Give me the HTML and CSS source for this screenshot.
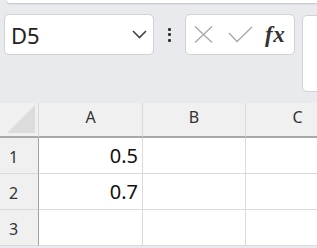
FILE: index.html
```html
<!DOCTYPE html>
<html lang="en">
<head>
    <meta charset="UTF-8">
    <meta name="viewport" content="width=device-width, initial-scale=1.0">
    <title>Sheet</title>
    <link rel="stylesheet" href="styles.css">
</head>
<body>
    <div class="ribbon"></div>
    <div class="toolbar">
        <div class="name-box">
            <span class="name">D5</span>
            <svg class="chevron" width="15" height="9" viewBox="0 0 15 9">
                <path d="M1 1 L7.5 7.5 L14 1" fill="none" stroke="#444" stroke-width="1.6"/>
            </svg>
        </div>
        <div class="more">
            <span class="dot"></span>
            <span class="dot"></span>
            <span class="dot"></span>
        </div>
        <div class="fx-box">
            <svg class="cancel" width="19" height="17" viewBox="0 0 19 17">
                <path d="M1 0.5 L18 16.5 M18 0.5 L1 16.5" stroke="#aaa" stroke-width="1.4"/>
            </svg>
            <svg class="enter" width="25" height="17" viewBox="0 0 25 17">
                <path d="M1 7 L9 15.5 L24 1" fill="none" stroke="#aaa" stroke-width="1.4"/>
            </svg>
            <span class="fx">fx</span>
        </div>
        <div class="formula-input"></div>
    </div>

    <!-- grid -->
    <div class="sheet">
        <div class="cell corner"><span class="tri"></span></div>
        <div class="cell col-head">A</div>
        <div class="cell col-head">B</div>
        <div class="cell col-head">C</div>

        <div class="cell row-head">1</div>
        <div class="cell num">0.5</div>
        <div class="cell"></div>
        <div class="cell"></div>

        <div class="cell row-head">2</div>
        <div class="cell num">0.7</div>
        <div class="cell"></div>
        <div class="cell"></div>

        <div class="cell row-head">3</div>
        <div class="cell"></div>
        <div class="cell"></div>
        <div class="cell"></div>
    </div>
</body>
</html>
```

FILE: styles.css
```css
body {
    margin: 0;
    width: 317px;
    height: 248px;
    overflow: hidden;
    background-color: #e8eaed;
    font-family: "Noto Sans", "Open Sans", sans-serif;
}
.ribbon {
    height: 3px;
    margin-left: 7px;
    background-color: #fff;
    border-bottom-left-radius: 6px;
    box-shadow: 0 1px 2px rgba(0, 0, 0, 0.18);
}
.toolbar {
    display: flex;
    align-items: flex-start;
    padding: 11px 0 0 4px;
}
.name-box {
    box-sizing: border-box;
    flex: 0 0 150px;
    height: 41px;
    display: flex;
    align-items: center;
    justify-content: space-between;
    padding: 0 6px 0 6px;
    background-color: #fff;
    border: 1px solid #d2d2d2;
    border-radius: 5px;
}
.name {
    font-size: 22px;
    color: #222;
}
.more {
    flex: 0 0 31px;
    height: 41px;
    display: flex;
    flex-direction: column;
    align-items: center;
    justify-content: center;
    gap: 2.5px;
}
.dot {
    width: 3px;
    height: 3px;
    border-radius: 1px;
    background-color: #333;
}
.fx-box {
    box-sizing: border-box;
    flex: 0 0 110px;
    height: 41px;
    display: flex;
    align-items: center;
    padding-left: 8px;
    background-color: #fff;
    border: 1px solid #d2d2d2;
    border-radius: 5px;
}
.enter {
    margin-left: 15px;
}
.fx {
    margin-left: 12px;
    font-family: "Liberation Serif", serif;
    font-style: italic;
    font-weight: bold;
    font-size: 23px;
    color: #333;
    letter-spacing: 0.5px;
}
.formula-input {
    box-sizing: border-box;
    flex: 0 0 40px;
    height: 77px;
    margin: 1px 0 0 7px;
    background-color: #fff;
    border: 1px solid #d2d2d2;
    border-radius: 5px;
}
.sheet {
    margin-top: 11px;
    display: grid;
    grid-template-columns: 39px 104px 103px 104px;
    grid-template-rows: 35px;
    grid-auto-rows: 36px;
    background-color: #fff;
}
.cell {
    box-sizing: border-box;
    display: flex;
    align-items: center;
    border-right: 1px solid #dadada;
    border-bottom: 1px solid #dadada;
    font-size: 20px;
    color: #111;
}
.corner, .col-head {
    background-color: #f0f0f0;
    border-bottom: 2px solid #a8a8a8;
}
.col-head {
    justify-content: center;
    padding-bottom: 6px;
    font-size: 16px;
    color: #333;
}
.corner {
    align-items: flex-end;
    justify-content: flex-end;
    padding: 0 3px 3px 0;
}
.tri {
    width: 0;
    height: 0;
    border-left: 28px solid transparent;
    border-bottom: 28px solid #dcdcdc;
}
.row-head {
    background-color: #f0f0f0;
    border-right: 1px solid #a0a0a0;
    padding: 2px 0 0 9px;
    font-size: 16px;
    color: #333;
}
.num {
    justify-content: flex-end;
    padding-right: 4px;
}
```
